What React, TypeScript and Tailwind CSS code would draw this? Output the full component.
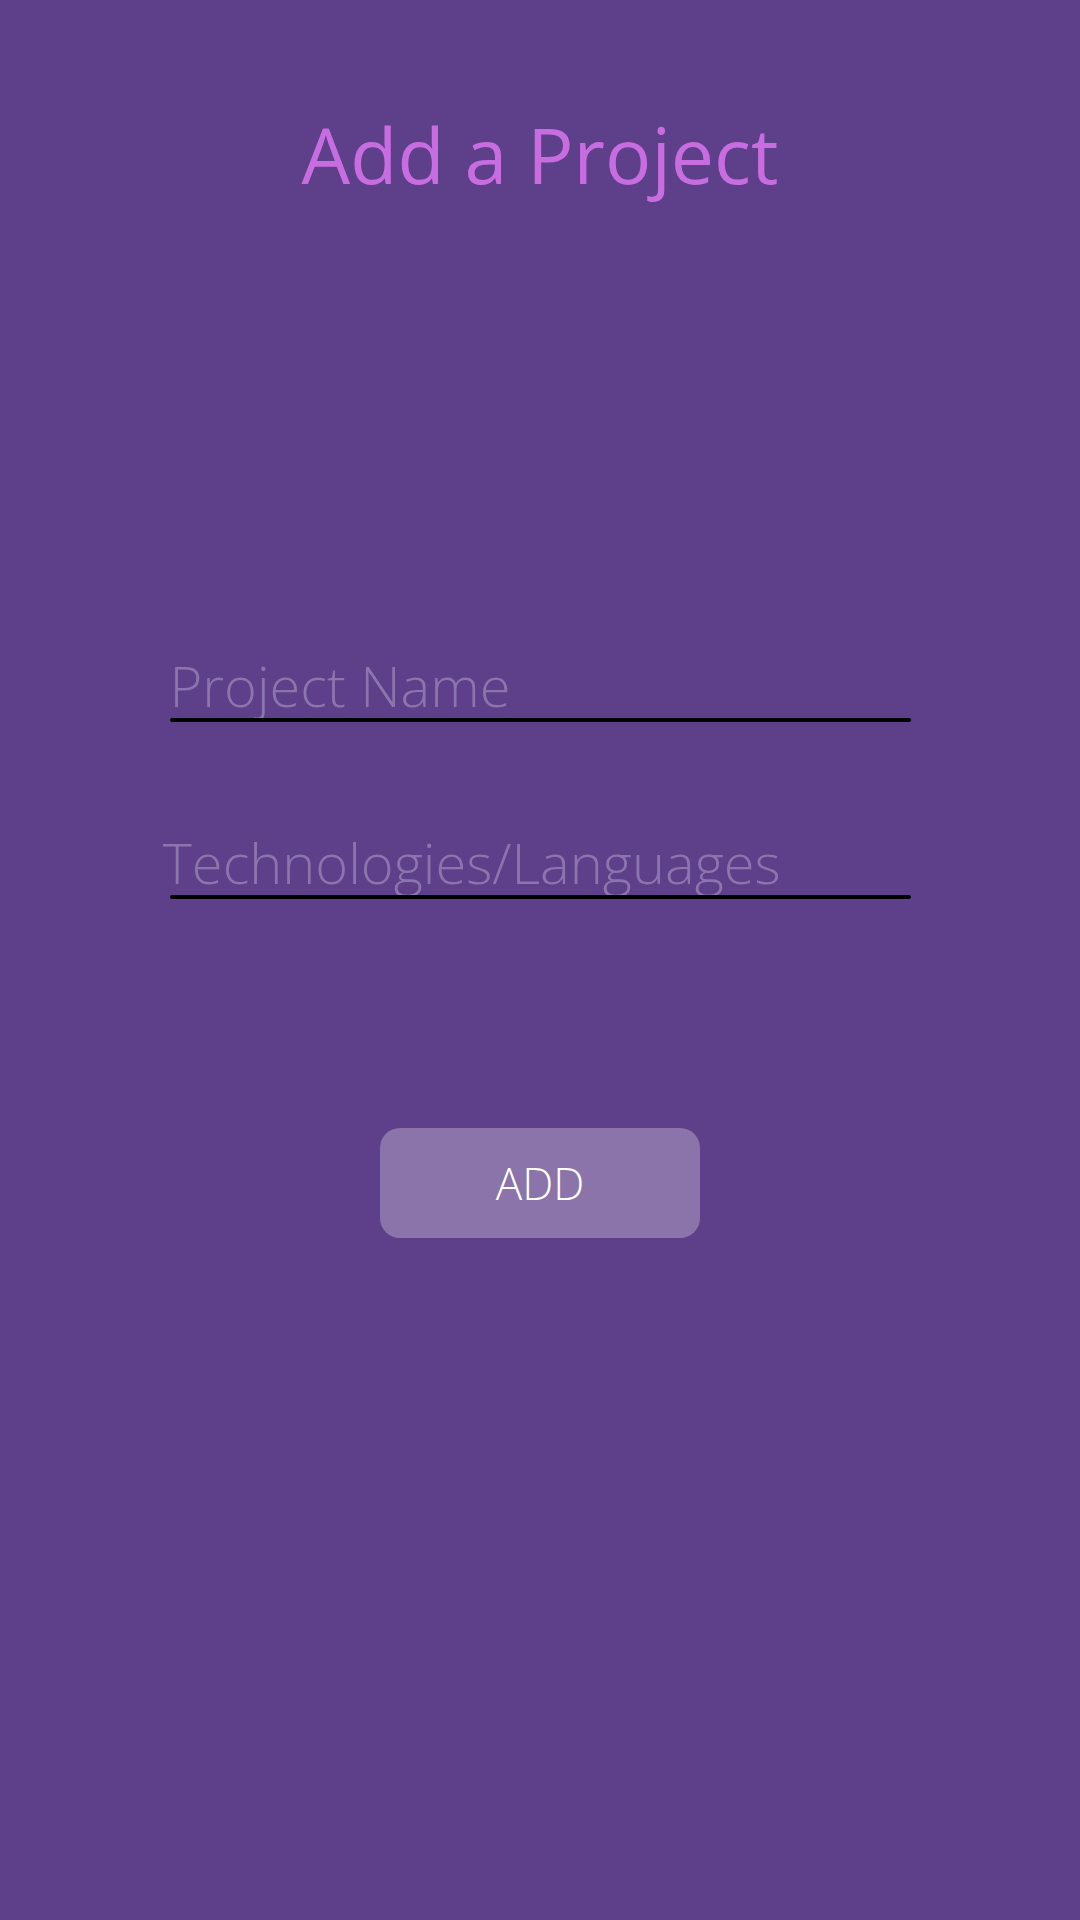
export default function App() {
  return (
    <div className="flex min-h-[1920px] w-full flex-col items-center bg-[#5e3f8a] font-['Open_Sans',sans-serif]">
      <h1 className="mt-[105px] text-[77px] leading-[1.3] font-normal text-[#c86de0]">Add a Project</h1>

      <form className="mt-[446px] flex w-[741px] flex-col gap-[106px]" onSubmit={(e) => e.preventDefault()}>
        <div className="flex flex-col">
          <input
            placeholder="Project Name"
            className="h-[67px] w-full bg-transparent text-[56px] leading-none font-light text-white outline-none placeholder:text-[#8c74ad]"
          />
          <div className="h-[4px] w-full rounded-full bg-black" />
        </div>
        <div className="flex flex-col">
          <input
            placeholder="Technologies/Languages"
            className="-ml-[7px] h-[67px] w-full bg-transparent text-[56px] leading-none font-light text-white outline-none placeholder:text-[#8c74ad]"
          />
          <div className="h-[4px] w-full rounded-full bg-black" />
        </div>
      </form>

      <button className="mt-[229px] h-[110px] w-[320px] rounded-[20px] bg-[#8a74aa] text-[44px] font-light text-white">
        ADD
      </button>
    </div>
  );
}
